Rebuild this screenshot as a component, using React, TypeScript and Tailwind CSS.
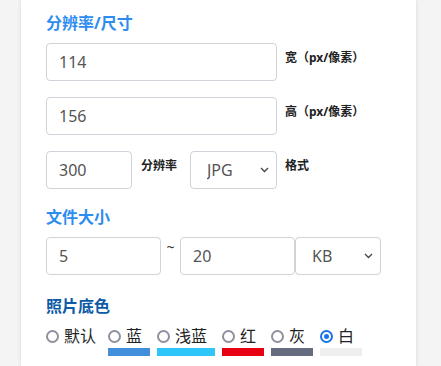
import React, { useState } from "react";

const font = { fontFamily: '"Noto Sans", "Noto Sans CJK SC", sans-serif' };

const Chevron: React.FC = () => (
  <svg
    width="9"
    height="6"
    viewBox="0 0 9 6"
    className="pointer-events-none absolute right-[8px] top-1/2 -translate-y-1/2"
  >
    <path d="M1 1l3.5 3.5L8 1" fill="none" stroke="#444" strokeWidth="1.3" />
  </svg>
);

const Field: React.FC<{ value: string; className: string }> = ({ value, className }) => (
  <input
    defaultValue={value}
    className={`h-[38px] rounded-[4px] border border-[#ced4da] bg-white px-3 text-[16px] text-[#555] outline-none ${className}`}
  />
);

const Select: React.FC<{ value: string; options: string[]; className: string }> = ({
  value,
  options,
  className,
}) => (
  <div className={`relative ${className}`}>
    <select
      defaultValue={value}
      className="h-[38px] w-full appearance-none rounded-[4px] border border-[#ced4da] bg-white pl-4 text-[16px] text-[#555] outline-none"
    >
      {options.map((o) => (
        <option key={o}>{o}</option>
      ))}
    </select>
    <Chevron />
  </div>
);

const Label: React.FC<{ text: string; className?: string }> = ({ text, className = "" }) => (
  <span className={`mt-[6px] text-[12px] leading-[18px] font-bold text-[#222] ${className}`}>
    {text}
  </span>
);

const colors = [
  { name: "默认", bar: "", w: "w-[55px]" },
  { name: "蓝", bar: "bg-[#438edb]", w: "w-[42px]" },
  { name: "浅蓝", bar: "bg-[#2ec5fb]", w: "w-[58px]" },
  { name: "红", bar: "bg-[#e60012]", w: "w-[42px]" },
  { name: "灰", bar: "bg-[#666b80]", w: "w-[42px]" },
  { name: "白", bar: "bg-[#eeeeee]", w: "w-[42px]" },
];

export default function App() {
  const [bg, setBg] = useState("白");

  return (
    <div className="min-h-[366px] bg-[#f4f4f4]" style={font}>
      <div className="ml-[21px] w-[395px] bg-white px-[25px] pt-[11px] pb-[11px] shadow-[0_0_4px_rgba(0,0,0,0.12)]">
        <h3 className="mb-2 text-[16px] leading-6 font-bold text-[#2d8cf0]">分辨率/尺寸</h3>

        <div className="mb-4 flex items-start">
          <Field value="114" className="w-[231px]" />
          <Label text="宽（px/像素）" className="ml-2" />
        </div>
        <div className="mb-4 flex items-start">
          <Field value="156" className="w-[231px]" />
          <Label text="高（px/像素）" className="ml-2" />
        </div>
        <div className="flex items-start">
          <Field value="300" className="w-[86px]" />
          <Label text="分辨率" className="ml-[9px] w-[49px]" />
          <Select value="JPG" options={["JPG", "PNG"]} className="w-[87px]" />
          <Label text="格式" className="ml-2" />
        </div>

        <h3 className="mt-[16px] mb-2 text-[16px] leading-6 font-bold text-[#2d8cf0]">文件大小</h3>
        <div className="flex items-start">
          <Field value="5" className="w-[115px]" />
          <span className="w-[19px] pt-[1px] text-center text-[14px] leading-[18px] text-[#333]">~</span>
          <Field value="20" className="w-[115px]" />
          <Select value="KB" options={["KB", "MB"]} className="w-[86px]" />
        </div>

        <h3 className="mt-[19px] mb-[9px] text-[16px] leading-6 font-bold text-[#0d5aa7]">照片底色</h3>
        <div className="flex gap-[7px]">
          {colors.map((c) => {
            const on = bg === c.name;
            return (
              <label key={c.name} className={`flex cursor-pointer flex-col ${c.w}`} onClick={() => setBg(c.name)}>
                <span className="flex h-[19px] items-center gap-[5px]">
                  <span
                    className={`flex h-[13px] w-[13px] shrink-0 items-center justify-center rounded-full border-2 ${
                      on ? "border-[#1a73e8]" : "border-[#8f8f9d]"
                    }`}
                  >
                    {on && <span className="h-[5px] w-[5px] rounded-full bg-[#1a73e8]" />}
                  </span>
                  <span className="text-[16px] leading-[19px] text-[#222]">{c.name}</span>
                </span>
                <span className={`mt-[2px] h-[8px] w-full ${c.bar}`} />
              </label>
            );
          })}
        </div>
      </div>
    </div>
  );
}
